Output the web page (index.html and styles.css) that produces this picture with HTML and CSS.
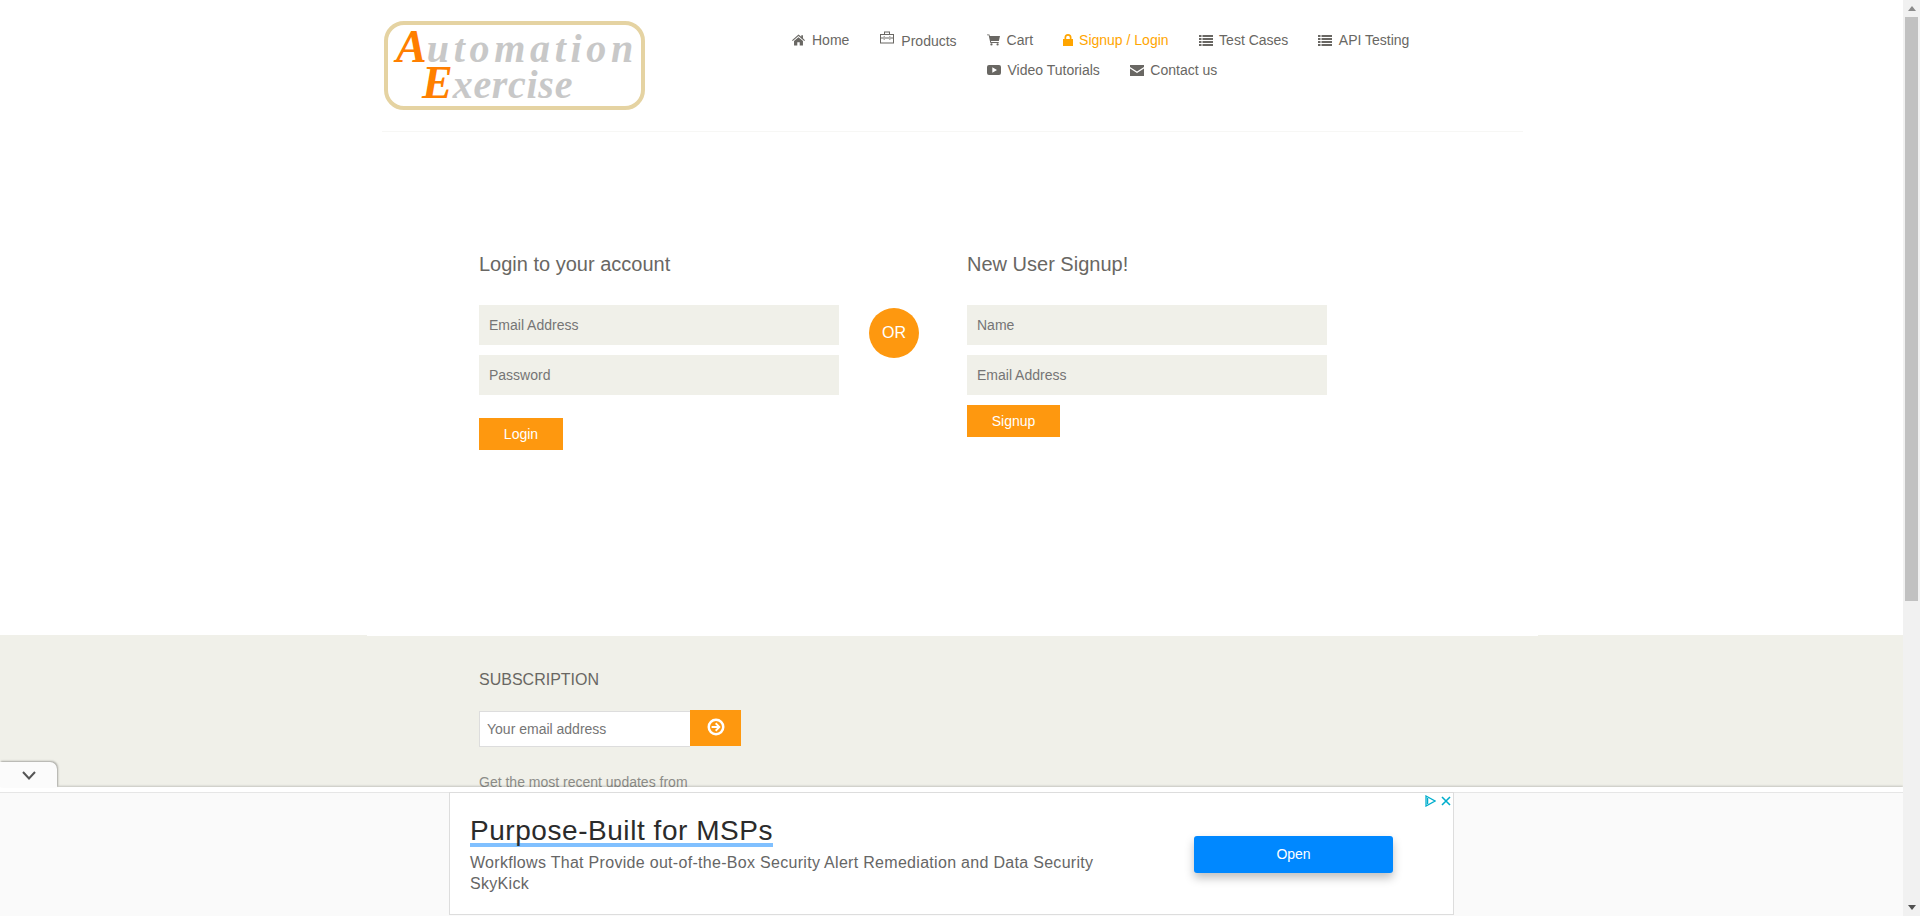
FILE: index.html
```html
<!DOCTYPE html>
<html lang="en">
<head>
  <meta charset="UTF-8" />
  <title>Automation Exercise - Signup / Login</title>
  <meta name="viewport" content="width=device-width, initial-scale=1.0" />
  <link rel="stylesheet" href="styles.css">
</head>
<body>
  <div class="window">
    <div class="page">
      <header class="header">
        <a class="logo" href="#">
          <span class="logo-line"><b>A</b>utomation</span>
          <span class="logo-line logo-line-two"><b>E</b>xercise</span>
        </a>
        <nav class="nav">
          <ul class="nav-row">
            <li><a href="#"><svg class="icon icon-sm" viewBox="0 0 14 12"><path d="M7 0 L10 2.6 V1 H11.8 V4.2 L14 6.2 L13.2 7 L7 1.7 L.8 7 L0 6.2 Z M2.2 7 L7 3 L11.8 7 V12 H8.3 V8.4 H5.7 V12 H2.2 Z"/></svg>Home</a></li>
            <li class="nav-products"><a href="#"><svg class="icon icon-bag" viewBox="0 0 14 12"><path fill-rule="evenodd" d="M4 0 H10 V2.5 H14 V12 H0 V2.5 H4 Z M5 1 V2.5 H9 V1 Z M1 3.5 V6 H13 V3.5 Z M1 7 V11 H13 V7 Z M3.5 5 H5 V8 H3.5 Z M9 5 H10.5 V8 H9 Z"/></svg>Products</a></li>
            <li><a href="#"><svg class="icon icon-sm" viewBox="0 0 14 12"><path d="M0 0 H2.6 L3 1.6 H14 L12.8 7 H4.2 L4.5 8.2 H12.6 V9.2 H3.6 L1.8 1 H0 Z"/><circle cx="4.8" cy="10.8" r="1.2"/><circle cx="11.4" cy="10.8" r="1.2"/></svg>Cart</a></li>
            <li class="active"><a href="#"><svg class="icon icon-lock" viewBox="0 0 10 12"><path fill-rule="evenodd" d="M1.5 5 V3.5 A3.5 3.5 0 0 1 8.5 3.5 V5 H10 V12 H0 V5 Z M3.2 5 H6.8 V3.5 A1.8 1.8 0 0 0 3.2 3.5 Z"/></svg>Signup / Login</a></li>
            <li><a href="#"><svg class="icon" viewBox="0 0 14 12"><path d="M0 1 H2.5 V3 H0 Z M3.5 1 H14 V3 H3.5 Z M0 4 H2.5 V6 H0 Z M3.5 4 H14 V6 H3.5 Z M0 7 H2.5 V9 H0 Z M3.5 7 H14 V9 H3.5 Z M0 10 H2.5 V12 H0 Z M3.5 10 H14 V12 H3.5 Z"/></svg>Test Cases</a></li>
            <li><a href="#"><svg class="icon" viewBox="0 0 14 12"><path d="M0 1 H2.5 V3 H0 Z M3.5 1 H14 V3 H3.5 Z M0 4 H2.5 V6 H0 Z M3.5 4 H14 V6 H3.5 Z M0 7 H2.5 V9 H0 Z M3.5 7 H14 V9 H3.5 Z M0 10 H2.5 V12 H0 Z M3.5 10 H14 V12 H3.5 Z"/></svg>API Testing</a></li>
          </ul>
          <ul class="nav-row nav-row-two">
            <li><a href="#"><svg class="icon" viewBox="0 0 14 12"><path fill-rule="evenodd" d="M2 1 H12 A2 2 0 0 1 14 3 V9 A2 2 0 0 1 12 11 H2 A2 2 0 0 1 0 9 V3 A2 2 0 0 1 2 1 Z M5.3 3.2 V8.8 L10 6 Z"/></svg>Video Tutorials</a></li>
            <li><a href="#"><svg class="icon" viewBox="0 0 14 12"><path d="M0 1 H14 V3 L7 7.4 L0 3 Z M0 4.6 L7 9 L14 4.6 V12 H0 Z"/></svg>Contact us</a></li>
          </ul>
        </nav>
      </header>

      <section class="forms">
        <form class="form-box">
          <h2>Login to your account</h2>
          <input type="email" placeholder="Email Address">
          <input type="password" placeholder="Password">
          <button type="button" class="btn btn-login">Login</button>
        </form>
        <div class="or">OR</div>
        <form class="form-box">
          <h2>New User Signup!</h2>
          <input type="text" placeholder="Name">
          <input type="email" placeholder="Email Address">
          <button type="button" class="btn btn-signup">Signup</button>
        </form>
      </section>

      <footer class="footer">
        <div class="footer-seam"></div>
        <div class="subscription">
          <h3>SUBSCRIPTION</h3>
          <div class="subscribe-row">
            <input type="email" placeholder="Your email address">
            <button type="button" class="subscribe-btn">
              <svg viewBox="0 0 18 18" width="18" height="18"><path fill-rule="evenodd" d="M9 0.5 A8.5 8.5 0 1 1 9 17.5 A8.5 8.5 0 1 1 9 0.5 Z M9 3 A6 6 0 1 0 9 15 A6 6 0 1 0 9 3 Z M9.3 4.6 L13.7 9 L9.3 13.4 L8 12.1 L10.1 10 H4.6 V8 H10.1 L8 5.9 Z"/></svg>
            </button>
          </div>
          <p>Get the most recent updates from our site and be updated your self...</p>
        </div>
      </footer>

      <aside class="ad-bar">
        <button type="button" class="ad-toggle">
          <svg viewBox="0 0 14 9" width="14" height="9"><path d="M1 1 L7 7.5 L13 1" fill="none" stroke="#555" stroke-width="2"/></svg>
        </button>
        <div class="ad-row">
          <div class="ad-box">
            <div class="ad-text">
              <a class="ad-title" href="#">Purpose-Built for MSPs</a>
              <p>Workflows That Provide out-of-the-Box Security Alert Remediation and Data Security<br>SkyKick</p>
            </div>
            <a class="ad-open" href="#">Open</a>
            <div class="ad-marks">
              <svg viewBox="0 0 11 12" width="11" height="12"><path d="M1 1 L10 6 L1 11 Z M2.6 3 V9" fill="none" stroke="#00aecd" stroke-width="1.3"/></svg>
              <svg viewBox="0 0 10 10" width="10" height="10"><path d="M1 1 L9 9 M9 1 L1 9" fill="none" stroke="#00aecd" stroke-width="1.6"/></svg>
            </div>
          </div>
        </div>
      </aside>
    </div>

    <div class="scrollbar">
      <span class="scroll-arrow scroll-up"></span>
      <span class="scroll-thumb"></span>
      <span class="scroll-arrow scroll-down"></span>
    </div>
  </div>
</body>
</html>
```

FILE: styles.css
```css
* {
  box-sizing: border-box;
}

html, body {
  margin: 0;
  padding: 0;
  height: 100%;
  overflow: hidden;
}

body {
  font-family: 'Liberation Sans', Arial, sans-serif;
  font-size: 14px;
  color: #696763;
  background: #fff;
}

a {
  color: inherit;
  text-decoration: none;
}

ul {
  list-style: none;
  margin: 0;
  padding: 0;
}

.window {
  display: flex;
  height: 916px;
}

.page {
  position: relative;
  flex: 1;
  height: 916px;
  overflow: hidden;
}

/* header */
.header {
  display: flex;
  width: 1141px;
  height: 132px;
  margin-left: 382px;
  padding: 21px 0 0 2px;
  border-bottom: 1px solid #f7f7f5;
}

.logo {
  display: block;
  width: 261px;
  height: 89px;
  padding: 6px 0 0 8px;
  border: 4px solid #e5d3a2;
  border-radius: 20px;
  font-family: 'Liberation Serif', serif;
  font-style: italic;
  font-weight: bold;
  font-size: 40px;
  line-height: 36px;
  color: #c8c8c8;
}

.logo b {
  font-size: 46px;
  line-height: 0;
  letter-spacing: 0;
  color: #ff7f00;
}

.logo-line {
  display: block;
  white-space: nowrap;
  letter-spacing: 4.7px;
}

.logo-line-two {
  padding-left: 26px;
  letter-spacing: 0.7px;
}

.nav {
  margin-left: 147px;
  padding-top: 9px;
}

.nav-row {
  display: flex;
  gap: 30px;
  height: 30px;
  line-height: 20px;
}

.nav-row-two {
  padding-left: 195px;
}

.nav-row .active {
  color: #ffa500;
}

.nav-products a {
  position: relative;
  top: 1px;
}

.icon {
  width: 14px;
  height: 12px;
  margin-right: 6.5px;
  vertical-align: -1px;
  fill: #696763;
}

.nav-row .icon-sm {
  width: 13px;
  margin-right: 7px;
}

.nav-row .active .icon {
  width: 10px;
  margin-right: 6px;
  fill: #ffa500;
}

.nav-row .icon-bag {
  width: 14px;
  height: 13px;
  margin-left: 1px;
  margin-right: 7px;
  vertical-align: 2px;
}

/* login + signup */
.forms {
  display: flex;
  height: 503px;
  padding: 121px 0 0 479px;
}

.form-box {
  width: 360px;
}

.form-box h2 {
  margin: 0 0 30px;
  font-size: 20px;
  font-weight: 300;
  line-height: 22px;
  color: #696763;
}

.form-box input {
  display: block;
  width: 100%;
  height: 40px;
  margin-bottom: 10px;
  padding: 0 10px;
  border: none;
  outline: none;
  background: #f0f0e9;
  font-family: inherit;
  font-size: 14px;
  color: #696763;
}

.btn {
  display: block;
  height: 32px;
  border: none;
  background: #fe980f;
  color: #fff;
  font-family: inherit;
  font-size: 14px;
  padding: 0;
}

.btn-login {
  width: 84px;
  margin-top: 23px;
}

.btn-signup {
  width: 93px;
}

.or {
  width: 50px;
  height: 50px;
  margin: 55px 48px 0 30px;
  border-radius: 50%;
  background: #fe980f;
  color: #fff;
  font-size: 16px;
  line-height: 50px;
  text-align: center;
}

/* footer */
.footer {
  height: 281px;
  background: #f0f0e9;
}

.footer-seam {
  height: 1px;
  margin: 0 365px 0 367px;
  background: #fff;
}

.subscription {
  width: 262px;
  margin-left: 479px;
  padding-top: 35px;
}

.subscription h3 {
  margin: 0 0 21px;
  font-size: 16px;
  font-weight: 300;
  line-height: 18px;
  color: #696763;
}

.subscribe-row {
  display: flex;
  align-items: flex-start;
}

.subscribe-row input {
  width: 211px;
  height: 36px;
  margin-top: 1px;
  padding: 0 7px;
  border: 1px solid #ddd;
  border-right: none;
  outline: none;
  background: #fff;
  font-family: inherit;
  font-size: 14px;
}

.subscribe-btn {
  width: 51px;
  height: 36px;
  padding: 0;
  border: none;
  background: #fe980f;
}

.subscribe-btn svg {
  display: block;
  margin: -2px auto 0;
  fill: #fff;
}

.subscription p {
  max-width: 225px;
  margin: 25px 0 0;
  line-height: 20px;
  color: #8c8c88;
}

/* anchored ad */
.ad-bar {
  position: absolute;
  left: 0;
  right: 0;
  bottom: 0;
  height: 129px;
  padding-top: 5px;
  background: #fff;
  box-shadow: 0 -1px 2px rgba(0, 0, 0, 0.18);
}

.ad-toggle {
  position: absolute;
  left: 0;
  top: -25px;
  width: 57px;
  height: 25px;
  padding: 2px 0 0;
  border: none;
  border-radius: 0 7px 0 0;
  background: #fbfbfb;
  box-shadow: 1px -1px 2px rgba(0, 0, 0, 0.3);
}

.ad-row {
  height: 124px;
  border-top: 1px solid #e6e6e6;
  background: #fafafa;
}

.ad-box {
  position: relative;
  display: flex;
  align-items: flex-start;
  width: 1005px;
  height: 123px;
  margin: -1px 0 0 449px;
  border: 1px solid #ddd;
  background: #fff;
}

.ad-text {
  width: 744px;
  padding: 19px 0 0 20px;
}

.ad-title {
  display: inline-block;
  height: 35px;
  border-bottom: 4px solid #80c0ff;
  font-size: 28px;
  letter-spacing: 0.55px;
  line-height: 38px;
  color: #2b2b2b;
}

.ad-text p {
  margin: 5px 0 0;
  font-size: 16px;
  letter-spacing: 0.3px;
  line-height: 21px;
  color: #666;
}

.ad-open {
  display: block;
  width: 199px;
  height: 37px;
  margin-top: 43px;
  border-radius: 3px;
  background: #0088ff;
  box-shadow: 0 5px 10px rgba(0, 0, 0, 0.25);
  color: #fff;
  font-size: 14px;
  line-height: 37px;
  text-align: center;
}

.ad-marks {
  position: absolute;
  top: 2px;
  right: 2px;
  display: flex;
  gap: 5px;
  align-items: center;
}

/* scrollbar */
.scrollbar {
  display: flex;
  flex-direction: column;
  align-items: center;
  width: 17px;
  height: 916px;
  background: #f1f1f1;
}

.scroll-arrow {
  width: 0;
  height: 0;
  border-left: 4px solid transparent;
  border-right: 4px solid transparent;
}

.scroll-up {
  margin: 6px 0 6px;
  border-bottom: 5px solid #8b8b8b;
}

.scroll-thumb {
  width: 13px;
  height: 584px;
  background: #c1c1c1;
}

.scroll-down {
  margin-top: auto;
  margin-bottom: 6px;
  border-top: 5px solid #505050;
}
```
